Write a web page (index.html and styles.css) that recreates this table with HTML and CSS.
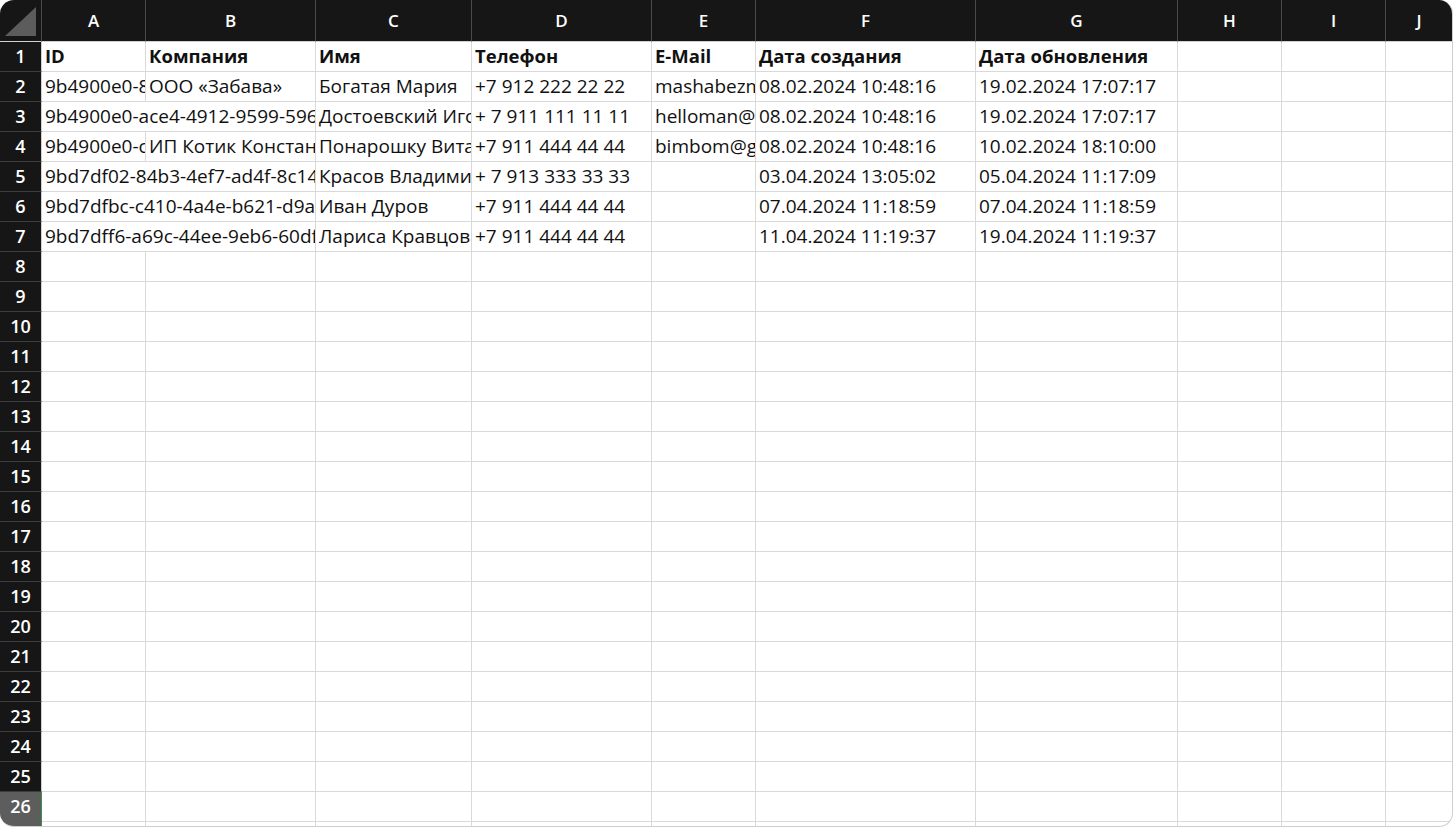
FILE: index.html
```html
<!DOCTYPE html>
<html lang="ru">
<head>
<meta charset="utf-8">
<title>Таблица</title>
<link rel="stylesheet" href="styles.css">
</head>
<body>
<div class="sheet">
  <div class="row head">
    <div class="corner"><svg width="41" height="41" viewBox="0 0 41 41"><polygon points="5,36 36,36 36,7" fill="#5c5c5c"/></svg></div>
    <div class="ch">A</div><div class="ch">B</div><div class="ch">C</div><div class="ch">D</div><div class="ch">E</div><div class="ch">F</div><div class="ch">G</div><div class="ch">H</div><div class="ch">I</div><div class="ch">J</div>
  </div>
  <div class="row bold">
    <div class="rh">1</div><div class="c">ID</div><div class="c">Компания</div><div class="c">Имя</div><div class="c">Телефон</div><div class="c">E-Mail</div><div class="c">Дата создания</div><div class="c">Дата обновления</div><div class="c"></div><div class="c"></div><div class="c"></div>
  </div>
  <div class="row">
    <div class="rh">2</div><div class="c">9b4900e0-8a2c-4f1b-9e3d-7c5a1b2e4f60</div><div class="c">ООО «Забава»</div><div class="c">Богатая Мария</div><div class="c">+7 912 222 22 22</div><div class="c">mashabezmail@gmail.com</div><div class="c">08.02.2024 10:48:16</div><div class="c">19.02.2024 17:07:17</div><div class="c"></div><div class="c"></div><div class="c"></div>
  </div>
  <div class="row">
    <div class="rh">3</div><div class="c span2">9b4900e0-ace4-4912-9599-596b3c1d2e8f</div><div class="c">Достоевский Игорь</div><div class="c">+ 7 911 111 11 11</div><div class="c">helloman@gmail.com</div><div class="c">08.02.2024 10:48:16</div><div class="c">19.02.2024 17:07:17</div><div class="c"></div><div class="c"></div><div class="c"></div>
  </div>
  <div class="row">
    <div class="rh">4</div><div class="c">9b4900e0-c1d2-4e3f-8a9b-0c1d2e3f4a5b</div><div class="c">ИП Котик Константин</div><div class="c">Понарошку Виталий</div><div class="c">+7 911 444 44 44</div><div class="c">bimbom@gmail.com</div><div class="c">08.02.2024 10:48:16</div><div class="c">10.02.2024 18:10:00</div><div class="c"></div><div class="c"></div><div class="c"></div>
  </div>
  <div class="row">
    <div class="rh">5</div><div class="c span2">9bd7df02-84b3-4ef7-ad4f-8c14e2a9b7c3</div><div class="c">Красов Владимир</div><div class="c">+ 7 913 333 33 33</div><div class="c"></div><div class="c">03.04.2024 13:05:02</div><div class="c">05.04.2024 11:17:09</div><div class="c"></div><div class="c"></div><div class="c"></div>
  </div>
  <div class="row">
    <div class="rh">6</div><div class="c span2">9bd7dfbc-c410-4a4e-b621-d9a3f5e7c1b2</div><div class="c">Иван Дуров</div><div class="c">+7 911 444 44 44</div><div class="c"></div><div class="c">07.04.2024 11:18:59</div><div class="c">07.04.2024 11:18:59</div><div class="c"></div><div class="c"></div><div class="c"></div>
  </div>
  <div class="row">
    <div class="rh">7</div><div class="c span2">9bd7dff6-a69c-44ee-9eb6-60df2b8a4c6e</div><div class="c">Лариса Кравцова</div><div class="c">+7 911 444 44 44</div><div class="c"></div><div class="c">11.04.2024 11:19:37</div><div class="c">19.04.2024 11:19:37</div><div class="c"></div><div class="c"></div><div class="c"></div>
  </div>
  <div class="row"><div class="rh">8</div><div class="c"></div><div class="c"></div><div class="c"></div><div class="c"></div><div class="c"></div><div class="c"></div><div class="c"></div><div class="c"></div><div class="c"></div><div class="c"></div></div>
  <div class="row"><div class="rh">9</div><div class="c"></div><div class="c"></div><div class="c"></div><div class="c"></div><div class="c"></div><div class="c"></div><div class="c"></div><div class="c"></div><div class="c"></div><div class="c"></div></div>
  <div class="row"><div class="rh">10</div><div class="c"></div><div class="c"></div><div class="c"></div><div class="c"></div><div class="c"></div><div class="c"></div><div class="c"></div><div class="c"></div><div class="c"></div><div class="c"></div></div>
  <div class="row"><div class="rh">11</div><div class="c"></div><div class="c"></div><div class="c"></div><div class="c"></div><div class="c"></div><div class="c"></div><div class="c"></div><div class="c"></div><div class="c"></div><div class="c"></div></div>
  <div class="row"><div class="rh">12</div><div class="c"></div><div class="c"></div><div class="c"></div><div class="c"></div><div class="c"></div><div class="c"></div><div class="c"></div><div class="c"></div><div class="c"></div><div class="c"></div></div>
  <div class="row"><div class="rh">13</div><div class="c"></div><div class="c"></div><div class="c"></div><div class="c"></div><div class="c"></div><div class="c"></div><div class="c"></div><div class="c"></div><div class="c"></div><div class="c"></div></div>
  <div class="row"><div class="rh">14</div><div class="c"></div><div class="c"></div><div class="c"></div><div class="c"></div><div class="c"></div><div class="c"></div><div class="c"></div><div class="c"></div><div class="c"></div><div class="c"></div></div>
  <div class="row"><div class="rh">15</div><div class="c"></div><div class="c"></div><div class="c"></div><div class="c"></div><div class="c"></div><div class="c"></div><div class="c"></div><div class="c"></div><div class="c"></div><div class="c"></div></div>
  <div class="row"><div class="rh">16</div><div class="c"></div><div class="c"></div><div class="c"></div><div class="c"></div><div class="c"></div><div class="c"></div><div class="c"></div><div class="c"></div><div class="c"></div><div class="c"></div></div>
  <div class="row"><div class="rh">17</div><div class="c"></div><div class="c"></div><div class="c"></div><div class="c"></div><div class="c"></div><div class="c"></div><div class="c"></div><div class="c"></div><div class="c"></div><div class="c"></div></div>
  <div class="row"><div class="rh">18</div><div class="c"></div><div class="c"></div><div class="c"></div><div class="c"></div><div class="c"></div><div class="c"></div><div class="c"></div><div class="c"></div><div class="c"></div><div class="c"></div></div>
  <div class="row"><div class="rh">19</div><div class="c"></div><div class="c"></div><div class="c"></div><div class="c"></div><div class="c"></div><div class="c"></div><div class="c"></div><div class="c"></div><div class="c"></div><div class="c"></div></div>
  <div class="row"><div class="rh">20</div><div class="c"></div><div class="c"></div><div class="c"></div><div class="c"></div><div class="c"></div><div class="c"></div><div class="c"></div><div class="c"></div><div class="c"></div><div class="c"></div></div>
  <div class="row"><div class="rh">21</div><div class="c"></div><div class="c"></div><div class="c"></div><div class="c"></div><div class="c"></div><div class="c"></div><div class="c"></div><div class="c"></div><div class="c"></div><div class="c"></div></div>
  <div class="row"><div class="rh">22</div><div class="c"></div><div class="c"></div><div class="c"></div><div class="c"></div><div class="c"></div><div class="c"></div><div class="c"></div><div class="c"></div><div class="c"></div><div class="c"></div></div>
  <div class="row"><div class="rh">23</div><div class="c"></div><div class="c"></div><div class="c"></div><div class="c"></div><div class="c"></div><div class="c"></div><div class="c"></div><div class="c"></div><div class="c"></div><div class="c"></div></div>
  <div class="row"><div class="rh">24</div><div class="c"></div><div class="c"></div><div class="c"></div><div class="c"></div><div class="c"></div><div class="c"></div><div class="c"></div><div class="c"></div><div class="c"></div><div class="c"></div></div>
  <div class="row"><div class="rh">25</div><div class="c"></div><div class="c"></div><div class="c"></div><div class="c"></div><div class="c"></div><div class="c"></div><div class="c"></div><div class="c"></div><div class="c"></div><div class="c"></div></div>
  <div class="row"><div class="rh sel">26</div><div class="c"></div><div class="c"></div><div class="c"></div><div class="c"></div><div class="c"></div><div class="c"></div><div class="c"></div><div class="c"></div><div class="c"></div><div class="c"></div></div>
  <div class="row"><div class="rh sel"></div><div class="c"></div><div class="c"></div><div class="c"></div><div class="c"></div><div class="c"></div><div class="c"></div><div class="c"></div><div class="c"></div><div class="c"></div><div class="c"></div></div>
</div>
</body>
</html>
```

FILE: styles.css
```css
* { box-sizing: border-box; }
html, body { margin: 0; padding: 0; background: #ffffff; }
.sheet {
  width: 1453px;
  height: 827px;
  border-radius: 14px;
  overflow: hidden;
  border-right: 1px solid #cdcdd2;
  border-bottom: 1px solid #cdcdd2;
  background: #ffffff;
  font-family: "Open Sans", "Noto Sans", sans-serif;
  color: #111111;
}
.row {
  display: grid;
  grid-template-columns: 42px 104px 170px 156px 180px 104px 220px 202px 104px 104px 1fr;
  height: 30px;
}
.row.head { height: 42px; }
.c {
  border-right: 1px solid #d9d9d9;
  border-bottom: 1px solid #d9d9d9;
  padding-left: 3px;
  white-space: nowrap;
  overflow: hidden;
  font-size: 19px;
  line-height: 28px;
}
.span2 { grid-column: span 2; }
.bold .c { font-weight: 700; font-size: 18.5px; }
.rh {
  background: #161616;
  color: #ffffff;
  text-align: center;
  font-size: 18px;
  font-weight: 600;
  line-height: 29px;
  border-right: 1px solid #d0d0d0;
  border-bottom: 1px solid #3e3e3e;
}
.rh.sel {
  background: #5d5d5d;
  border-right: 1px solid #3f8f52;
  border-bottom: 1px solid #5d5d5d;
}
.corner {
  background: #161616;
  border-right: 1px solid #4a4a4a;
  border-bottom: 1px solid #d0d0d0;
  display: flex;
}
.ch {
  background: #161616;
  color: #ffffff;
  text-align: center;
  font-size: 17px;
  font-weight: 600;
  line-height: 41px;
  border-right: 1px solid #4a4a4a;
  border-bottom: 1px solid #d0d0d0;
}
.ch:last-child { border-right: none; }
.c:last-child { border-right: none; }
```
